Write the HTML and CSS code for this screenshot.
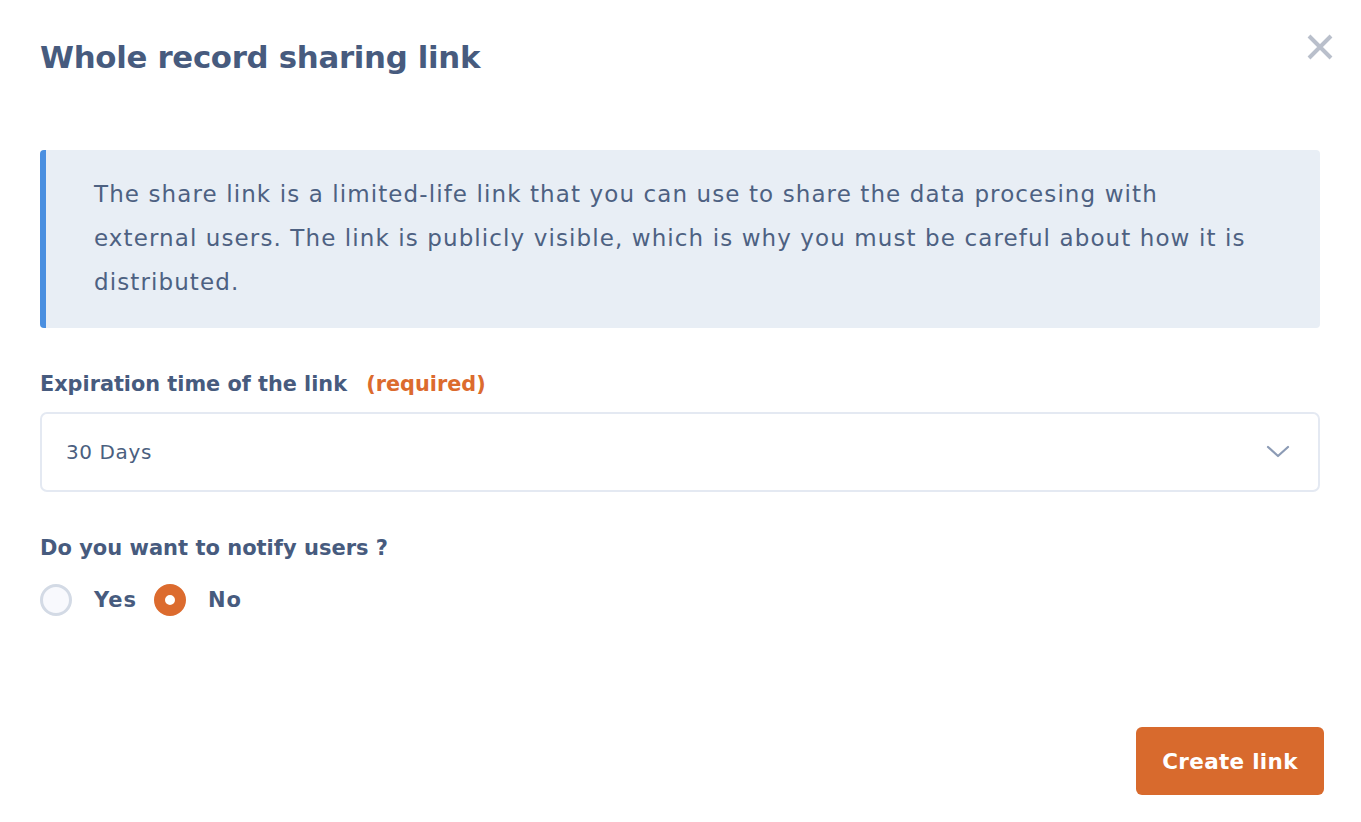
FILE: index.html
```html
<!DOCTYPE html>
<html lang="en">
<head>
<meta charset="utf-8">
<title>Whole record sharing link</title>
<link rel="stylesheet" href="styles.css">
</head>
<body>
<div class="modal">
  <header class="modal-header">
    <h1 class="title">Whole record sharing link</h1>
    <button class="close" aria-label="Close">
      <svg width="28" height="28" viewBox="0 0 28 28"><path d="M3 3 L25 25 M25 3 L3 25" stroke="#b9bfcb" stroke-width="4" stroke-linecap="butt"/></svg>
    </button>
  </header>
  <div class="info">
    The share link is a limited-life link that you can use to share the data procesing with external users. The link is publicly visible, which is why you must be careful about how it is distributed.
  </div>
  <div class="field">
    <label class="label">Expiration time of the link <span class="required">(required)</span></label>
    <div class="select">
      <span>30 Days</span>
      <svg width="24" height="14" viewBox="0 0 24 14"><path d="M2 2 L12 11 L22 2" fill="none" stroke="#8c9bb5" stroke-width="2.2" stroke-linecap="round" stroke-linejoin="round"/></svg>
    </div>
  </div>
  <div class="field notify">
    <div class="label">Do you want to notify users ?</div>
    <div class="radios">
      <span class="radio"></span><span class="radio-label">Yes</span>
      <span class="radio checked"></span><span class="radio-label">No</span>
    </div>
  </div>
  <footer class="footer">
    <button class="btn">Create link</button>
  </footer>
</div>
</body>
</html>
```
FILE: styles.css
```css
* { box-sizing: border-box; }
html, body { margin: 0; padding: 0; background: #fff; }
body {
  font-family: "DejaVu Sans", "Open Sans", sans-serif;
  color: #475b7e;
}
.modal {
  width: 1361px;
  height: 822px;
  padding: 0 41px 0 40px;
  display: flex;
  flex-direction: column;
}
.modal-header {
  display: flex;
  justify-content: space-between;
  align-items: flex-start;
  height: 150px;
}
.title {
  margin: 35px 0 0;
  font-size: 30.8px;
  font-weight: 700;
  letter-spacing: -0.3px;
  line-height: 44px;
  color: #475b7e;
}
.close {
  margin: 33px -14px 0 0;
  padding: 0;
  border: 0;
  background: none;
  width: 28px;
  height: 28px;
}
.info {
  background: #e8eef5;
  border-left: 6px solid #4a8fe0;
  border-radius: 4px;
  padding: 22px 70px 24px 48px;
  font-size: 23px;
  letter-spacing: 1.1px;
  line-height: 44px;
  color: #4d6182;
}
.field { margin-top: 35px; }
.label {
  display: block;
  font-size: 20.8px;
  font-weight: 700;
  line-height: 42px;
  color: #475b7e;
}
.required { color: #dc6b2e; margin-left: 12px; }
.select {
  margin-top: 7px;
  height: 80px;
  border: 2px solid #e4e9f2;
  border-radius: 7px;
  display: flex;
  align-items: center;
  justify-content: space-between;
  padding: 0 28px 0 24px;
  font-size: 20px;
  letter-spacing: 0.6px;
  color: #4b5f80;
}
.notify { margin-top: 35px; }
.notify .label { font-size: 21px; }
.radios {
  display: flex;
  align-items: center;
  margin-top: 13px;
  height: 36px;
}
.radio {
  width: 32px;
  height: 32px;
  border-radius: 50%;
  border: 3px solid #d3dae5;
  background: #f8f9fd;
  flex: none;
}
.radio.checked {
  border: 11px solid #dc6b2e;
  background: #fff;
}
.radio-label {
  font-size: 21px;
  font-weight: 700;
  letter-spacing: 1px;
  margin: 0 17px 0 22px;
  color: #475b7e;
}
.footer {
  margin-top: auto;
  display: flex;
  justify-content: flex-end;
  padding-bottom: 27px;
  margin-right: -4px;
}
.btn {
  width: 188px;
  height: 68px;
  border: 0;
  border-radius: 6px;
  background: #d86a2d;
  color: #fff;
  font-family: inherit;
  font-size: 21.5px;
  font-weight: 700;
  letter-spacing: 0.3px;
}
```
